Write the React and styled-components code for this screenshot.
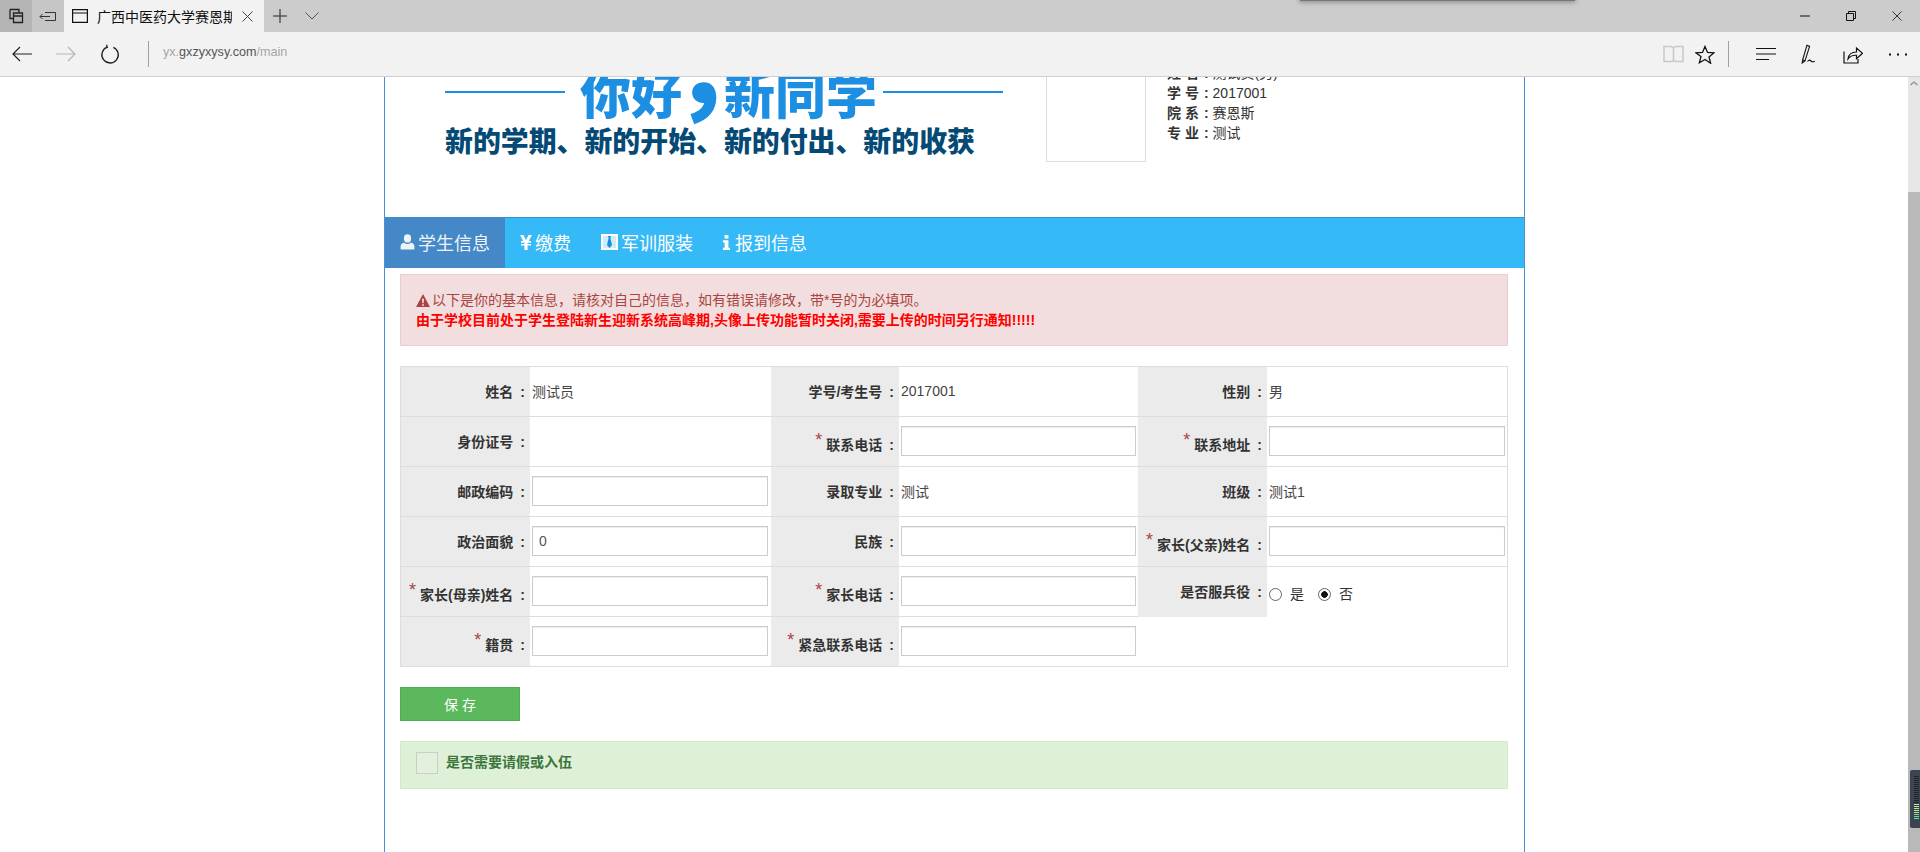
import React from "react";
import styled, { createGlobalStyle } from "styled-components";

const Global = createGlobalStyle`
  * { box-sizing: border-box; }
  html, body { margin: 0; padding: 0; height: 100%; overflow: hidden; background: #fff; }
  body { font-family: "Liberation Sans", "Noto Sans CJK SC", sans-serif; font-size: 14px; color: #333; }
`;

const Shell = styled.div`
  position: relative;
  width: 1920px;
  height: 852px;
  display: flex;
  flex-direction: column;
  overflow: hidden;
`;

/* ---------- browser chrome ---------- */
const TitleBar = styled.div`
  height: 32px;
  flex: none;
  display: flex;
  align-items: stretch;
  background: #cccccc;
`;
const TabSquare = styled.div`
  width: 32px;
  display: flex;
  align-items: center;
  justify-content: center;
  background: ${(p) => p.$bg};
`;
const ActiveTab = styled.div`
  width: 200px;
  display: flex;
  align-items: center;
  padding-left: 8px;
  background: #f2f2f2;
`;
const TabTitle = styled.div`
  width: 135px;
  margin-left: 9px;
  overflow: hidden;
  white-space: nowrap;
  font-size: 14px;
  line-height: 18px;
  color: #111;
  font-family: "Noto Sans CJK SC", sans-serif;
`;
const TabClose = styled.div`
  margin-left: 10px;
  display: flex;
`;
const TabAction = styled.div`
  width: 32px;
  display: flex;
  align-items: center;
  justify-content: center;
`;
const Spacer = styled.div`
  flex: 1;
`;
const WinButton = styled.div`
  width: 46px;
  display: flex;
  align-items: center;
  justify-content: center;
`;
const TopShadow = styled.div`
  position: absolute;
  left: 1300px;
  top: -2px;
  width: 275px;
  height: 3px;
  background: #777;
  box-shadow: 0 0 5px 1px rgba(0, 0, 0, 0.35);
`;
const AddressBar = styled.div`
  height: 45px;
  flex: none;
  display: flex;
  align-items: center;
  background: #f2f2f2;
  border-bottom: 1px solid #cfcfcf;
  padding-left: 12px;
`;
const NavIcon = styled.div`
  display: flex;
  margin-right: ${(p) => p.$gap || 0}px;
`;
const Divider = styled.div`
  width: 1px;
  height: 26px;
  background: #a0a0a0;
  margin: ${(p) => p.$margin};
`;
const Url = styled.div`
  font-size: 12.6px;
  color: #a6a6a6;
  margin-top: -4px;
`;
const UrlHost = styled.span`
  color: #555;
`;

/* ---------- viewport ---------- */
const Viewport = styled.div`
  flex: 1;
  min-height: 0;
  display: flex;
  background: #fff;
`;
const PageArea = styled.div`
  flex: 1;
  min-width: 0;
  overflow: hidden;
`;
const Container = styled.div`
  width: 1141px;
  height: 100%;
  margin-left: 384px;
  border-left: 1px solid #4a90d9;
  border-right: 1px solid #4a90d9;
`;
const Scrollbar = styled.div`
  width: 12px;
  flex: none;
  display: flex;
  flex-direction: column;
  background: #e6e6e6;
`;
const ScrollUp = styled.div`
  height: 115px;
  flex: none;
  padding-top: 4px;
  display: flex;
  justify-content: center;
  align-items: flex-start;
`;
const ScrollThumb = styled.div`
  flex: 1;
  background: #b9b9b9;
`;
const Widget = styled.div`
  position: absolute;
  left: 1910px;
  top: 770px;
  width: 10px;
  height: 58px;
  display: flex;
`;

/* ---------- header ---------- */
const Header = styled.div`
  height: 140px;
  display: flex;
  padding-left: 60px;
  overflow: hidden;
`;
const Logo = styled.div`
  width: 601px;
  flex: none;
`;
const LogoTop = styled.div`
  display: flex;
  align-items: center;
  width: 558px;
  height: 60px;
  margin-top: -15px;
`;
const LogoRule = styled.div`
  width: 120px;
  height: 2px;
  flex: none;
  background: #1c8fe3;
`;
const LogoTitle = styled.div`
  flex: 1;
  padding-left: 15px;
  font-family: "Noto Sans CJK SC", sans-serif;
  font-weight: 900;
  font-size: 51px;
  line-height: 60px;
  color: #1c8fe3;
  white-space: nowrap;
  overflow: visible;
  width: 318px;
`;
const LogoComma = styled.span`
  font-size: 104px;
  line-height: 0;
  margin-left: -10px;
  letter-spacing: -52px;
  vertical-align: 6px;
`;
const LogoSub = styled.div`
  margin-top: 3px;
  font-family: "Noto Sans CJK SC", sans-serif;
  font-weight: 900;
  font-size: 27.9px;
  line-height: 30px;
  color: #044a75;
  white-space: nowrap;
`;
const Photo = styled.div`
  width: 100px;
  height: 105px;
  flex: none;
  margin-top: -20px;
  border: 1px solid #dddddd;
`;
const StudentInfo = styled.div`
  margin-left: 21px;
  margin-top: -14px;
`;
const InfoLine = styled.div`
  line-height: 20px;
  font-size: 14px;
  color: #333;
`;
const InfoKey = styled.b`
  font-weight: 700;
`;
const InfoColon = styled.b`
  font-weight: 700;
  margin: 0 4px 0 5px;
`;

/* ---------- tabs ---------- */
const Nav = styled.div`
  height: 51px;
  display: flex;
  background: #36b9f7;
  border-top: 1px solid #3a8fd0;
`;
const NavItem = styled.div`
  display: flex;
  align-items: center;
  gap: 3px;
  padding: 0 15px 2px;
  font-size: 18px;
  color: ${(p) => (p.$active ? "#eef3f8" : "#ffffff")};
  background: ${(p) => (p.$active ? "#4488c8" : "transparent")};
`;

/* ---------- content ---------- */
const Content = styled.div`
  padding: 6px 16px 0 15px;
`;
const DangerBox = styled.div`
  height: 72px;
  padding: 15px 15px 0;
  background: #f2dede;
  border: 1px solid #ebccd1;
  color: #a94442;
  font-size: 14px;
  line-height: 20px;
`;
const DangerLine = styled.div`
  display: flex;
  align-items: center;
  gap: 2px;
`;
const Urgent = styled.div`
  color: #ff0000;
  font-weight: 700;
`;
const InfoTable = styled.div`
  margin-top: 20px;
  display: grid;
  grid-template-columns: 129px 241px 128px 239px 129px 240px;
  grid-auto-rows: 50px;
  width: 1108px;
  border: 1px solid #ddd;
  border-bottom: none;
`;
const Label = styled.div`
  display: flex;
  align-items: center;
  justify-content: flex-end;
  gap: 4px;
  padding: ${(p) => (p.$star ? "7px" : "0")} 5px 2px 0;
  background: #ebebeb;
  font-weight: 700;
  white-space: nowrap;
  color: #333;
  border-bottom: ${(p) => (p.$noLine ? "0" : "1px solid #ddd")};
`;
const LabelColon = styled.span`
  margin-left: 7px;
`;
const Star = styled.span`
  color: #a94442;
  font-size: 18px;
  line-height: 18px;
  font-weight: 400;
  margin-top: -8px;
`;
const Value = styled.div`
  display: flex;
  align-items: center;
  gap: 6px;
  padding: 0 2px 2px;
  color: #444;
  border-bottom: ${(p) => (p.$noLine ? "0" : "1px solid #ddd")};
`;
const Field = styled.input`
  display: block;
  width: 236px;
  height: 30px;
  padding: 0 6px;
  border: 1px solid #ccc;
  box-shadow: inset 0 1px 1px rgba(0, 0, 0, 0.075);
  background: #fff;
  color: #555;
  font: inherit;
  outline: none;
`;
const RadioRow = styled(Value)`
  gap: 0;
`;
const Radio = styled.input`
  appearance: none;
  width: 13px;
  height: 13px;
  margin: 6px 0 0;
  border-radius: 50%;
  border: 1px solid #666;
  background: ${(p) => (p.$on ? "radial-gradient(circle, #111 0 3px, #fff 3.6px)" : "#fff")};
`;
const RadioText = styled.span`
  margin: 3px 14px 0 8px;
  color: #333;
`;
const SaveButton = styled.button`
  display: block;
  margin-top: 20px;
  width: 120px;
  height: 34px;
  background: #5cb85c;
  border: 1px solid #4cae4c;
  color: #fff;
  font: inherit;
  padding: 0;
`;
const SuccessBox = styled.div`
  margin-top: 20px;
  height: 48px;
  display: flex;
  align-items: center;
  padding: 0 0 4px 15px;
  background: #dff0d8;
  border: 1px solid #d6e9c6;
  color: #3c763d;
  font-weight: 700;
`;
const CheckBox = styled.div`
  width: 22px;
  height: 22px;
  border: 1px solid #cccccc;
  margin-right: 8px;
  background: #e2f1dc;
`;
const SuccessText = styled.span`
  margin-top: -5px;
`;

/* ---------- icons ---------- */
const Svg = ({ w, h, children, stroke = "#222", sw = 1.2 }) => (
  <svg width={w} height={h} viewBox={`0 0 ${w} ${h}`} fill="none" stroke={stroke} strokeWidth={sw}>
    {children}
  </svg>
);

const IconTabs = () => (
  <Svg w={16} h={16} sw={1.3}>
    <path d="M2 1.5h9v3M2 1.5v9h3M5.5 5h9v9.5h-9zM5.5 8h9" />
  </Svg>
);
const IconAside = () => (
  <Svg w={18} h={12} sw={1} stroke="#333">
    <path d="M6 2.5h10.5v8H6M1 6.5h10M3.5 4l-2.5 2.5L3.5 9" />
  </Svg>
);
const IconPage = () => (
  <Svg w={16} h={14} sw={1.2} stroke="#111">
    <path d="M.6.6h14.8v12.8H.6zM.6 4h14.8" />
  </Svg>
);
const IconX = ({ s = 10, c = "#333" }) => (
  <Svg w={s} h={s} sw={1} stroke={c}>
    <path d={`M.5.5L${s - 0.5} ${s - 0.5}M${s - 0.5} .5L.5 ${s - 0.5}`} />
  </Svg>
);
const IconPlus = () => (
  <Svg w={14} h={14} sw={1} stroke="#222">
    <path d="M7 0v14M0 7h14" />
  </Svg>
);
const IconChevron = () => (
  <Svg w={14} h={8} sw={1} stroke="#555">
    <path d="M.5.5L7 7 13.5.5" />
  </Svg>
);
const IconArrowLeft = ({ c = "#222", flip }) => (
  <Svg w={20} h={16} sw={1.2} stroke={c}>
    <path d={flip ? "M0 8h19M12 1l7 7-7 7" : "M20 8H1M8 1L1 8l7 7"} />
  </Svg>
);
const IconRefresh = () => (
  <Svg w={20} h={20} sw={1.3} stroke="#222">
    <path d="M7 3.2A8.2 8.2 0 1 0 13.4 3.3M6.5 0.8L7.3 3.4 4.6 4.4" />
  </Svg>
);
const IconBook = () => (
  <Svg w={21} h={18} sw={1.5} stroke="#c8c8c8">
    <path d="M1 1.5h7.5l2 1.5 2-1.5H20v15h-7.5l-2-.8-2 .8H1zM10.5 3v13" />
  </Svg>
);
const IconStar = () => (
  <Svg w={20} h={19} sw={1.3} stroke="#111">
    <path d="M10 1.5l2.5 5.9 6.4.5-4.9 4.1 1.6 6.2L10 14.4l-5.6 3.3L6 11.5 1.1 7.9l6.4-.5z" />
  </Svg>
);
const IconHub = () => (
  <Svg w={20} h={14} sw={1.2} stroke="#111">
    <path d="M0 1.5h20M0 7h20M0 12.5h13" />
  </Svg>
);
const IconPen = () => (
  <Svg w={18} h={20} sw={1.1} stroke="#111">
    <path d="M6 1.2l2.6 1.2L4 16.8l-2.4-.8zM1.6 16l-.4 3 2.8-2.2M6.5 17.5c1.5-2 2.5-1.5 3.5-.5s2 1.2 3.8.2" />
  </Svg>
);
const IconShare = () => (
  <Svg w={20} h={19} sw={1.2} stroke="#111">
    <path d="M1 6.5v11.5h14v-4M5 14c.5-4 3.5-7 8.5-7V3l6 5.3-6 5.3v-3.3C9.5 10 7 11.3 5 14z" />
  </Svg>
);
const IconDots = () => (
  <svg width="18" height="3" viewBox="0 0 18 3" fill="#111">
    <rect x="0" y="0.5" width="2" height="2" />
    <rect x="8" y="0.5" width="2" height="2" />
    <rect x="16" y="0.5" width="2" height="2" />
  </svg>
);
const IconMin = () => (
  <Svg w={10} h={2} sw={1} stroke="#111">
    <path d="M0 1h10" />
  </Svg>
);
const IconRestore = () => (
  <Svg w={10} h={10} sw={1} stroke="#111">
    <path d="M.5 2.5h7v7h-7zM2.5 2.5v-2h7v7h-2" />
  </Svg>
);
const IconScrollUp = () => (
  <Svg w={8} h={5} sw={1.2} stroke="#8f8f8f">
    <path d="M.5 4L4 1l3.5 3" />
  </Svg>
);
const IconUser = () => (
  <svg width="15" height="16" viewBox="0 0 15 16" fill="currentColor">
    <ellipse cx="7.5" cy="4.4" rx="3.6" ry="4.2" />
    <path d="M0.6 15.5v-3.2c0-2 1.7-3.4 3.6-3.6 1 .9 2.1 1.2 3.3 1.2s2.3-.3 3.3-1.2c1.9.2 3.6 1.6 3.6 3.6v3.2z" />
  </svg>
);
const IconYen = () => (
  <svg width="12" height="15" viewBox="0 0 12 15" fill="currentColor">
    <path d="M0 0h3.4L6 5l2.6-5H12L8.8 6H11v1.7H7.6v1.2H11v1.7H7.6V15H4.4v-4.4H1V8.9h3.4V7.7H1V6h2.2z" />
  </svg>
);
const IconTie = () => (
  <svg width="17" height="16" viewBox="0 0 17 16">
    <rect width="17" height="16" fill="#fff" />
    <rect x="2" y="2" width="13" height="12" fill="#36b9f7" opacity="0.25" />
    <path d="M7 2h3l-.6 2.2L11 11l-2.5 3L6 11l1.6-6.8z" fill="#1d8fd6" />
  </svg>
);
const IconInfo = () => (
  <svg width="9" height="15" viewBox="0 0 9 15" fill="currentColor">
    <rect x="1.6" y="0" width="3.8" height="3.6" />
    <path d="M0 5.2h5.4v7.6H7V15H0v-2.2h1.6V7.4H0z" />
  </svg>
);
const IconWarn = () => (
  <svg width="14" height="13" viewBox="0 0 15 14" fill="currentColor">
    <path fillRule="evenodd" d="M7.5 0L15 14H0zM6.4 5l.4 5h1.4l.4-5zM6.5 11v1.7h2V11z" />
  </svg>
);
const MeterBars = () => {
  const bars = Array.from({ length: 22 });
  return (
    <svg width="10" height="58" viewBox="0 0 10 58">
      <path d="M2 0h8v58H2a2 2 0 0 1-2-2V2a2 2 0 0 1 2-2z" fill="#3b4450" />
      {bars.map((_, i) => (
        <rect
          key={i}
          x="4"
          y={6 + i * 2}
          width="5"
          height="1"
          fill={i < 14 ? "#20262e" : i < 19 ? "#b4e98a" : "#5fe0a8"}
        />
      ))}
    </svg>
  );
};

const rows = [
  [
    { l: "姓名" }, { v: "测试员" },
    { l: "学号/考生号" }, { v: "2017001" },
    { l: "性别" }, { v: "男" },
  ],
  [
    { l: "身份证号" }, { v: "" },
    { l: "联系电话", s: 1 }, { i: "" },
    { l: "联系地址", s: 1 }, { i: "" },
  ],
  [
    { l: "邮政编码" }, { i: "" },
    { l: "录取专业" }, { v: "测试" },
    { l: "班级" }, { v: "测试1" },
  ],
  [
    { l: "政治面貌" }, { i: "0" },
    { l: "民族" }, { i: "" },
    { l: "家长(父亲)姓名", s: 1 }, { i: "" },
  ],
  [
    { l: "家长(母亲)姓名", s: 1 }, { i: "" },
    { l: "家长电话", s: 1 }, { i: "" },
    { l: "是否服兵役", n: 1 }, { r: 1 },
  ],
  [
    { l: "籍贯", s: 1 }, { i: "" },
    { l: "紧急联系电话", s: 1 }, { i: "" },
    { e: 1 }, { e: 1 },
  ],
];

const renderCell = (c, key) => {
  if (c.e) return <Value key={key} />;
  if (c.l)
    return (
      <Label key={key} $star={c.s} $noLine={c.n}>
        {c.s ? <Star>*</Star> : null}
        <span>{c.l}<LabelColon>:</LabelColon></span>
      </Label>
    );
  if (c.r)
    return (
      <RadioRow key={key} $noLine>
        <Radio type="radio" name="army" readOnly />
        <RadioText>是</RadioText>
        <Radio type="radio" name="army" $on readOnly />
        <RadioText>否</RadioText>
      </RadioRow>
    );
  if (c.i !== undefined)
    return (
      <Value key={key}>
        <Field defaultValue={c.i} />
      </Value>
    );
  return <Value key={key}>{c.v}</Value>;
};

export default function App() {
  return (
    <Shell>
      <Global />
      <TitleBar>
        <TabSquare $bg="#b4b4b4"><IconTabs /></TabSquare>
        <TabSquare $bg="#c6c6c6"><IconAside /></TabSquare>
        <ActiveTab>
          <IconPage />
          <TabTitle>广西中医药大学赛恩斯新生报到系统</TabTitle>
          <TabClose><IconX s={11} c="#444" /></TabClose>
        </ActiveTab>
        <TabAction><IconPlus /></TabAction>
        <TabAction><IconChevron /></TabAction>
        <Spacer />
        <WinButton><IconMin /></WinButton>
        <WinButton><IconRestore /></WinButton>
        <WinButton><IconX /></WinButton>
      </TitleBar>
      <TopShadow />
      <AddressBar>
        <NavIcon $gap={24}><IconArrowLeft /></NavIcon>
        <NavIcon $gap={24}><IconArrowLeft c="#b5b5b5" flip /></NavIcon>
        <NavIcon><IconRefresh /></NavIcon>
        <Divider $margin="0 14px 0 28px" />
        <Url>yx.<UrlHost>gxzyxysy.com</UrlHost>/main</Url>
        <Spacer />
        <NavIcon $gap={11}><IconBook /></NavIcon>
        <NavIcon><IconStar /></NavIcon>
        <Divider $margin="0 27px 0 13px" />
        <NavIcon $gap={25}><IconHub /></NavIcon>
        <NavIcon $gap={24}><IconPen /></NavIcon>
        <NavIcon $gap={26}><IconShare /></NavIcon>
        <NavIcon $gap={13}><IconDots /></NavIcon>
      </AddressBar>
      <Viewport>
        <PageArea>
          <Container>
            <Header>
              <Logo>
                <LogoTop>
                  <LogoRule />
                  <LogoTitle>你好<LogoComma>，</LogoComma>新同学</LogoTitle>
                  <LogoRule />
                </LogoTop>
                <LogoSub>新的学期、新的开始、新的付出、新的收获</LogoSub>
              </Logo>
              <Photo />
              <StudentInfo>
                <InfoLine><InfoKey>姓 名</InfoKey><InfoColon>:</InfoColon>测试员(男)</InfoLine>
                <InfoLine><InfoKey>学 号</InfoKey><InfoColon>:</InfoColon>2017001</InfoLine>
                <InfoLine><InfoKey>院 系</InfoKey><InfoColon>:</InfoColon>赛恩斯</InfoLine>
                <InfoLine><InfoKey>专 业</InfoKey><InfoColon>:</InfoColon>测试</InfoLine>
              </StudentInfo>
            </Header>
            <Nav>
              <NavItem $active><IconUser />学生信息</NavItem>
              <NavItem><IconYen />缴费</NavItem>
              <NavItem><IconTie />军训服装</NavItem>
              <NavItem><IconInfo />报到信息</NavItem>
            </Nav>
            <Content>
              <DangerBox>
                <DangerLine><IconWarn />以下是你的基本信息，请核对自己的信息，如有错误请修改，带*号的为必填项。</DangerLine>
                <Urgent>由于学校目前处于学生登陆新生迎新系统高峰期,头像上传功能暂时关闭,需要上传的时间另行通知!!!!!</Urgent>
              </DangerBox>
              <InfoTable>
                {rows.flatMap((row, r) => row.map((c, i) => renderCell(c, `${r}-${i}`)))}
              </InfoTable>
              <SaveButton>保 存</SaveButton>
              <SuccessBox>
                <CheckBox />
                <SuccessText>是否需要请假或入伍</SuccessText>
              </SuccessBox>
            </Content>
          </Container>
        </PageArea>
        <Scrollbar>
          <ScrollUp><IconScrollUp /></ScrollUp>
          <ScrollThumb />
        </Scrollbar>
      </Viewport>
      <Widget><MeterBars /></Widget>
    </Shell>
  );
}
